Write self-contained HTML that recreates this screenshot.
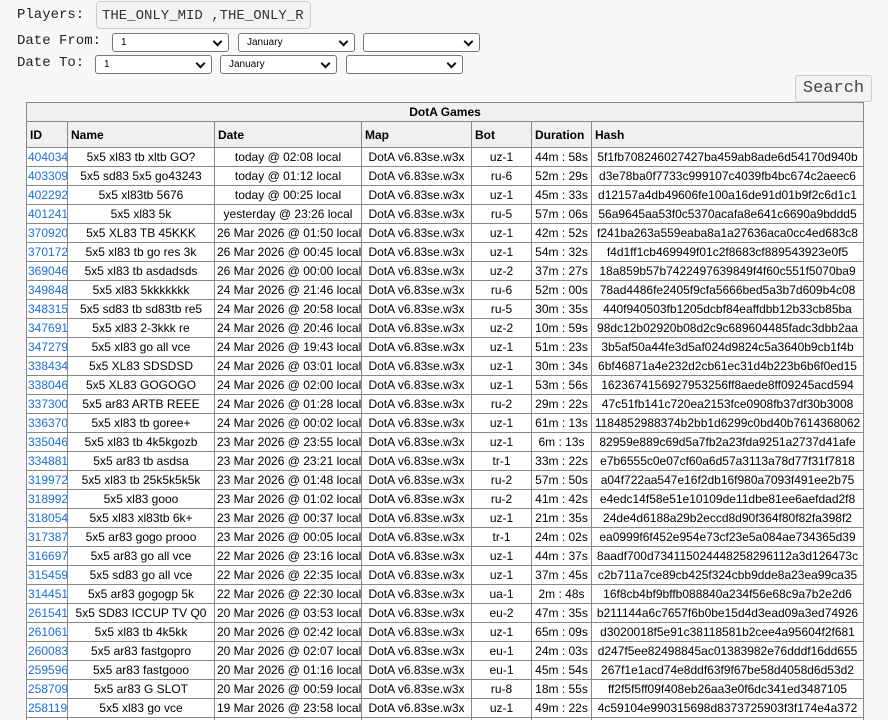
<!DOCTYPE html>
<html style="height:720px;overflow:hidden"><head><meta charset="utf-8"><style>
html,body{height:720px;overflow:hidden}
body{margin:0;background:#f8f8fa;font-family:"Liberation Sans",Arial,sans-serif;width:888px;position:relative}
.mono{font-family:"Liberation Mono",monospace;font-size:14px;color:#222;position:absolute}
.inp{position:absolute;left:96px;top:1px;width:215px;height:28px;border:1px solid #ccc;border-radius:4px;background:#f3f3f5;box-sizing:border-box;font-family:"Liberation Mono",monospace;font-size:14px;color:#333;padding:6px 5px;white-space:nowrap;overflow:hidden}
.sel{position:absolute;height:19px;border:1px solid #777;border-radius:3px;background:#fff;box-sizing:border-box;font-size:10px;padding:3px 8px;color:#000}
.sel:after{content:"";position:absolute;right:7px;top:4px;width:5px;height:5px;border-right:2px solid #111;border-bottom:2px solid #111;transform:rotate(45deg)}
.btn{position:absolute;left:795px;top:75px;width:77px;height:27px;border:1px solid #ccc;border-radius:3px;background:#f2f2f4;box-sizing:border-box;font-family:"Liberation Mono",monospace;font-size:17px;color:#444;text-align:center;line-height:25px}
table{position:absolute;left:26px;top:102px;border-collapse:collapse;table-layout:fixed;width:837px;background:#fff;font-size:12px}
td,th{border:1px solid #888;height:18px;padding:0 2px;white-space:nowrap;overflow:hidden;text-align:center;color:#000}
th{background:#f0f0f0;font-weight:bold}
tr.h th{text-align:left;height:25px;padding-left:3px}
td:first-child{text-align:left;padding:0 1px}
td a{color:#1a6fd8;text-decoration:none}
</style></head><body>
<div class="mono" style="left:17px;top:7px">Players:</div>
<div class="inp">THE_ONLY_MID ,THE_ONLY_R</div>
<div class="mono" style="left:17px;top:33px">Date From:</div>
<div class="sel" style="left:112px;top:33px;width:117px">1</div>
<div class="sel" style="left:238px;top:33px;width:117px">January</div>
<div class="sel" style="left:363px;top:33px;width:117px"></div>
<div class="mono" style="left:17px;top:55px">Date To:</div>
<div class="sel" style="left:95px;top:55px;width:117px">1</div>
<div class="sel" style="left:220px;top:55px;width:117px">January</div>
<div class="sel" style="left:346px;top:55px;width:117px"></div>
<div class="btn">Search</div>
<table>
<colgroup><col style="width:41px"><col style="width:147px"><col style="width:147px"><col style="width:110px"><col style="width:60px"><col style="width:60px"><col style="width:272px"></colgroup>
<tr><th colspan="7" style="text-align:center">DotA Games</th></tr>
<tr class="h"><th>ID</th><th>Name</th><th>Date</th><th>Map</th><th>Bot</th><th>Duration</th><th>Hash</th></tr>
<tr><td><a>404034</a></td><td>5x5 xl83 tb xltb GO?</td><td>today @ 02:08 local</td><td>DotA v6.83se.w3x</td><td>uz-1</td><td>44m : 58s</td><td>5f1fb708246027427ba459ab8ade6d54170d940b</td></tr>
<tr><td><a>403309</a></td><td>5x5 sd83 5x5 go43243</td><td>today @ 01:12 local</td><td>DotA v6.83se.w3x</td><td>ru-6</td><td>52m : 29s</td><td>d3e78ba0f7733c999107c4039fb4bc674c2aeec6</td></tr>
<tr><td><a>402292</a></td><td>5x5 xl83tb 5676</td><td>today @ 00:25 local</td><td>DotA v6.83se.w3x</td><td>uz-1</td><td>45m : 33s</td><td>d12157a4db49606fe100a16de91d01b9f2c6d1c1</td></tr>
<tr><td><a>401241</a></td><td>5x5 xl83 5k</td><td>yesterday @ 23:26 local</td><td>DotA v6.83se.w3x</td><td>ru-5</td><td>57m : 06s</td><td>56a9645aa53f0c5370acafa8e641c6690a9bddd5</td></tr>
<tr><td><a>370920</a></td><td>5x5 XL83 TB 45KKK</td><td>26 Mar 2026 @ 01:50 local</td><td>DotA v6.83se.w3x</td><td>uz-1</td><td>42m : 52s</td><td>f241ba263a559eaba8a1a27636aca0cc4ed683c8</td></tr>
<tr><td><a>370172</a></td><td>5x5 xl83 tb go res 3k</td><td>26 Mar 2026 @ 00:45 local</td><td>DotA v6.83se.w3x</td><td>uz-1</td><td>54m : 32s</td><td>f4d1ff1cb469949f01c2f8683cf889543923e0f5</td></tr>
<tr><td><a>369046</a></td><td>5x5 xl83 tb asdadsds</td><td>26 Mar 2026 @ 00:00 local</td><td>DotA v6.83se.w3x</td><td>uz-2</td><td>37m : 27s</td><td>18a859b57b7422497639849f4f60c551f5070ba9</td></tr>
<tr><td><a>349848</a></td><td>5x5 xl83 5kkkkkkk</td><td>24 Mar 2026 @ 21:46 local</td><td>DotA v6.83se.w3x</td><td>ru-6</td><td>52m : 00s</td><td>78ad4486fe2405f9cfa5666bed5a3b7d609b4c08</td></tr>
<tr><td><a>348315</a></td><td>5x5 sd83 tb sd83tb re5</td><td>24 Mar 2026 @ 20:58 local</td><td>DotA v6.83se.w3x</td><td>ru-5</td><td>30m : 35s</td><td>440f940503fb1205dcbf84eaffdbb12b33cb85ba</td></tr>
<tr><td><a>347691</a></td><td>5x5 xl83 2-3kkk re</td><td>24 Mar 2026 @ 20:46 local</td><td>DotA v6.83se.w3x</td><td>uz-2</td><td>10m : 59s</td><td>98dc12b02920b08d2c9c689604485fadc3dbb2aa</td></tr>
<tr><td><a>347279</a></td><td>5x5 xl83 go all vce</td><td>24 Mar 2026 @ 19:43 local</td><td>DotA v6.83se.w3x</td><td>uz-1</td><td>51m : 23s</td><td>3b5af50a44fe3d5af024d9824c5a3640b9cb1f4b</td></tr>
<tr><td><a>338434</a></td><td>5x5 XL83 SDSDSD</td><td>24 Mar 2026 @ 03:01 local</td><td>DotA v6.83se.w3x</td><td>uz-1</td><td>30m : 34s</td><td>6bf46871a4e232d2cb61ec31d4b223b6b6f0ed15</td></tr>
<tr><td><a>338046</a></td><td>5x5 XL83 GOGOGO</td><td>24 Mar 2026 @ 02:00 local</td><td>DotA v6.83se.w3x</td><td>uz-1</td><td>53m : 56s</td><td>1623674156927953256ff8aede8ff09245acd594</td></tr>
<tr><td><a>337300</a></td><td>5x5 ar83 ARTB REEE</td><td>24 Mar 2026 @ 01:28 local</td><td>DotA v6.83se.w3x</td><td>ru-2</td><td>29m : 22s</td><td>47c51fb141c720ea2153fce0908fb37df30b3008</td></tr>
<tr><td><a>336370</a></td><td>5x5 xl83 tb goree+</td><td>24 Mar 2026 @ 00:02 local</td><td>DotA v6.83se.w3x</td><td>uz-1</td><td>61m : 13s</td><td>1184852988374b2bb1d6299c0bd40b7614368062</td></tr>
<tr><td><a>335046</a></td><td>5x5 xl83 tb 4k5kgozb</td><td>23 Mar 2026 @ 23:55 local</td><td>DotA v6.83se.w3x</td><td>uz-1</td><td>6m : 13s</td><td>82959e889c69d5a7fb2a23fda9251a2737d41afe</td></tr>
<tr><td><a>334881</a></td><td>5x5 ar83 tb asdsa</td><td>23 Mar 2026 @ 23:21 local</td><td>DotA v6.83se.w3x</td><td>tr-1</td><td>33m : 22s</td><td>e7b6555c0e07cf60a6d57a3113a78d77f31f7818</td></tr>
<tr><td><a>319972</a></td><td>5x5 xl83 tb 25k5k5k5k</td><td>23 Mar 2026 @ 01:48 local</td><td>DotA v6.83se.w3x</td><td>ru-2</td><td>57m : 50s</td><td>a04f722aa547e16f2db16f980a7093f491ee2b75</td></tr>
<tr><td><a>318992</a></td><td>5x5 xl83 gooo</td><td>23 Mar 2026 @ 01:02 local</td><td>DotA v6.83se.w3x</td><td>ru-2</td><td>41m : 42s</td><td>e4edc14f58e51e10109de11dbe81ee6aefdad2f8</td></tr>
<tr><td><a>318054</a></td><td>5x5 xl83 xl83tb 6k+</td><td>23 Mar 2026 @ 00:37 local</td><td>DotA v6.83se.w3x</td><td>uz-1</td><td>21m : 35s</td><td>24de4d6188a29b2eccd8d90f364f80f82fa398f2</td></tr>
<tr><td><a>317387</a></td><td>5x5 ar83 gogo prooo</td><td>23 Mar 2026 @ 00:05 local</td><td>DotA v6.83se.w3x</td><td>tr-1</td><td>24m : 02s</td><td>ea0999f6f452e954e73cf23e5a084ae734365d39</td></tr>
<tr><td><a>316697</a></td><td>5x5 ar83 go all vce</td><td>22 Mar 2026 @ 23:16 local</td><td>DotA v6.83se.w3x</td><td>uz-1</td><td>44m : 37s</td><td>8aadf700d734115024448258296112a3d126473c</td></tr>
<tr><td><a>315459</a></td><td>5x5 sd83 go all vce</td><td>22 Mar 2026 @ 22:35 local</td><td>DotA v6.83se.w3x</td><td>uz-1</td><td>37m : 45s</td><td>c2b711a7ce89cb425f324cbb9dde8a23ea99ca35</td></tr>
<tr><td><a>314451</a></td><td>5x5 ar83 gogogp 5k</td><td>22 Mar 2026 @ 22:30 local</td><td>DotA v6.83se.w3x</td><td>ua-1</td><td>2m : 48s</td><td>16f8cb4bf9bffb088840a234f56e68c9a7b2e2d6</td></tr>
<tr><td><a>261541</a></td><td>5x5 SD83 ICCUP TV Q0</td><td>20 Mar 2026 @ 03:53 local</td><td>DotA v6.83se.w3x</td><td>eu-2</td><td>47m : 35s</td><td>b211144a6c7657f6b0be15d4d3ead09a3ed74926</td></tr>
<tr><td><a>261061</a></td><td>5x5 xl83 tb 4k5kk</td><td>20 Mar 2026 @ 02:42 local</td><td>DotA v6.83se.w3x</td><td>uz-1</td><td>65m : 09s</td><td>d3020018f5e91c38118581b2cee4a95604f2f681</td></tr>
<tr><td><a>260083</a></td><td>5x5 ar83 fastgopro</td><td>20 Mar 2026 @ 02:07 local</td><td>DotA v6.83se.w3x</td><td>eu-1</td><td>24m : 03s</td><td>d247f5ee82498845ac01383982e76dddf16dd655</td></tr>
<tr><td><a>259596</a></td><td>5x5 ar83 fastgooo</td><td>20 Mar 2026 @ 01:16 local</td><td>DotA v6.83se.w3x</td><td>eu-1</td><td>45m : 54s</td><td>267f1e1acd74e8ddf63f9f67be58d4058d6d53d2</td></tr>
<tr><td><a>258709</a></td><td>5x5 ar83 G SLOT</td><td>20 Mar 2026 @ 00:59 local</td><td>DotA v6.83se.w3x</td><td>ru-8</td><td>18m : 55s</td><td>ff2f5f5ff09f408eb26aa3e0f6dc341ed3487105</td></tr>
<tr><td><a>258119</a></td><td>5x5 xl83 go vce</td><td>19 Mar 2026 @ 23:58 local</td><td>DotA v6.83se.w3x</td><td>uz-1</td><td>49m : 22s</td><td>4c59104e990315698d8373725903f3f174e4a372</td></tr>
<tr><td><a>257950</a></td><td>5x5 xl83 go</td><td>19 Mar 2026 @ 23:40 local</td><td>DotA v6.83se.w3x</td><td>uz-1</td><td>10m : 00s</td><td>aaaa</td></tr>
</table>
</body></html>
